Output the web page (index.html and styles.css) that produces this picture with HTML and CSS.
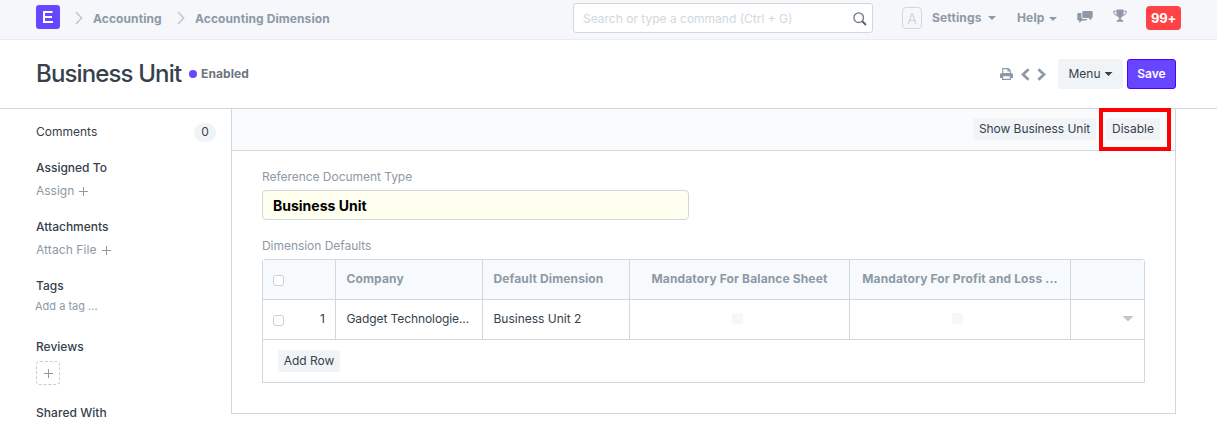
FILE: index.html
```html
<!DOCTYPE html>
<html lang="en">
<head>
<meta charset="utf-8">
<title>Business Unit</title>
<link rel="stylesheet" href="styles.css">
</head>
<body>
<header class="navbar">
  <nav class="crumbs">
    <svg class="logo" viewBox="0 0 24 24" width="24" height="24"><rect width="24" height="24" rx="3" fill="#6846ff"/><path d="M7 7H16.500M7 12H16M7 17H17M8 6V18" fill="none" stroke="#fff" stroke-width="2"/></svg>
    <svg class="chev" viewBox="0 0 8 14" width="8" height="14"><path d="M1 1l5.600 6L1 13"/></svg>
    <a class="crumb c1">Accounting</a>
    <svg class="chev" viewBox="0 0 8 14" width="8" height="14"><path d="M1 1l5.600 6L1 13"/></svg>
    <a class="crumb c2">Accounting Dimension</a>
  </nav>
  <div class="search">
    <span class="placeholder">Search or type a command (Ctrl + G)</span>
    <svg viewBox="0 0 14 14" width="14" height="14"><circle cx="5.700" cy="5.700" r="4.800" fill="none" stroke="#6c7680" stroke-width="1.300"/><path d="M9.200 9.200l3.800 3.800" stroke="#5a6672" stroke-width="2"/></svg>
  </div>
  <div class="nav-right">
    <span class="avatar">A</span>
    <span class="nav-link settings">Settings</span><i class="caret"></i>
    <span class="nav-link help">Help</span><i class="caret"></i>
    <svg class="chat" viewBox="0 0 16 14" width="16" height="14"><path fill="#8d99a6" d="M6.200 1h8.600q.9 0 .9.900v5.200q0 .9-.9.900h-.5v2.600L11.500 8H6.200q-.9 0-.9-.9V1.900q0-.9.900-.9z"/><path fill="#8d99a6" d="M1.200 3H4.400v4.300Q4.400 9 6.100 9H10v.6q0 .8-.8.800H5.200L2.200 13v-2.600h-1q-.9 0-.9-.9V3.900q0-.9.900-.9z"/></svg>
    <svg class="trophy" viewBox="0 0 14 14" width="14" height="14"><path fill="#8d99a6" d="M3.500.5h7v4.700q0 2.300-2.600 3.700v1.600q2.500.2 2.500 1.900v.3H3.600v-.3q0-1.700 2.500-1.900V8.900Q3.500 7.500 3.500 5.200z"/><path d="M3.500 2.200H.7v1q.3 2.800 3.900 3.300M10.500 2.200h2.800v1q-.3 2.800-3.900 3.300" fill="none" stroke="#8d99a6"/></svg>
    <span class="count">99+</span>
  </div>
</header>

<section class="page-head">
  <h1>Business Unit</h1>
  <i class="dot"></i><span class="status">Enabled</span>
  <div class="actions">
    <svg class="print" viewBox="0 0 13 12" width="13" height="12"><path d="M2.700 5.500V.6h5.600l2 2v2.900M8 .8v2.200h2.200" fill="none" stroke="#8d99a6" stroke-width="1.100"/><path fill="#8d99a6" fill-rule="evenodd" d="M1.500 5h10Q13 5 13 6.500V10h-2v2H2v-2H0V6.500Q0 5 1.500 5zM3.200 8.200v2.600h6.600V8.200z"/></svg>
    <svg class="prev" viewBox="0 0 9 13" width="9" height="13"><path d="M7.600 1.200L2 6.500l5.600 5.300"/></svg>
    <svg class="next" viewBox="0 0 9 13" width="9" height="13"><path d="M1.400 1.200L7 6.500l-5.600 5.300"/></svg>
    <button class="btn menu"><span>Menu</span><i class="caret"></i></button>
    <button class="btn save">Save</button>
  </div>
</section>

<main class="layout">
  <aside class="sidebar">
    <div class="comments"><span>Comments</span><span class="badge">0</span></div>
    <h2 class="s-assigned">Assigned To</h2>
    <a class="add"><span>Assign</span><i class="plus"></i></a>
    <h2 class="s-attach">Attachments</h2>
    <a class="add"><span class="t-file">Attach File</span><i class="plus"></i></a>
    <h2 class="s-tags">Tags</h2>
    <a class="tag">Add a tag ...</a>
    <h2 class="s-reviews">Reviews</h2>
    <span class="review"><i class="plus"></i></span>
    <h2 class="s-shared">Shared With</h2>
  </aside>
  <div class="panel">
    <div class="toolbar">
      <button class="btn-xs show">Show Business Unit</button>
      <div class="highlighted"><button class="btn-xs disable">Disable</button></div>
    </div>
    <div class="form">
      <label class="l1">Reference Document Type</label>
      <div class="input"><span>Business Unit</span></div>
      <label class="l2">Dimension Defaults</label>
      <div class="grid">
        <div class="row head">
          <div class="cell idx"><i class="check"></i></div>
          <div class="cell">Company</div>
          <div class="cell">Default Dimension</div>
          <div class="cell mid">Mandatory For Balance Sheet</div>
          <div class="cell mid">Mandatory For Profit and Loss ...</div>
          <div class="cell"></div>
        </div>
        <div class="row body">
          <div class="cell idx"><i class="check"></i><span>1</span></div>
          <div class="cell company">Gadget Technologie...</div>
          <div class="cell">Business Unit 2</div>
          <div class="cell mid"><i class="off"></i></div>
          <div class="cell mid"><i class="off"></i></div>
          <div class="cell end"><i class="open"></i></div>
        </div>
        <div class="foot"><button class="btn-xs addrow">Add Row</button></div>
      </div>
    </div>
  </div>
</main>
</body>
</html>
```
FILE: styles.css
```css
* { box-sizing: border-box; }
body { margin: 0; height: 423px; overflow: hidden; background: #fff; color: #36414c; font: 12px/18px Inter, "Liberation Sans", sans-serif; white-space: nowrap; }
svg, i { display: block; flex: none; }
h1, h2 { margin: 0; }
button { font: inherit; color: inherit; border: 0; margin: 0; }

.navbar { height: 40px; background: #f5f7fa; border-bottom: 1px solid #e9edf1; display: flex; align-items: flex-start; padding-left: 36px; }
.crumbs { display: flex; width: 537px; }
.logo { margin-top: 5px; }
.chev { margin: 11px 0 0 15px; fill: none; stroke: #c0cad3; stroke-width: 1.7; }
.crumb { margin: 10px 0 0 10px; font-weight: 700; color: #8d99a6; letter-spacing: 0.09px; }
.c1 { width: 69px; }
.search { width: 300px; height: 30px; margin-top: 3px; border: 1px solid #d1d8dd; border-radius: 3px; background: #fff; display: flex; align-items: center; justify-content: space-between; padding: 1px 5px 0 9px; color: #d1d8dd; }
.nav-right { display: flex; margin-left: 29px; }
.avatar { width: 20px; height: 22px; margin-top: 7px; border: 1px solid #d1d8dd; border-radius: 4px; color: #d1d8dd; text-align: center; line-height: 21px; font-size: 14px; }
.nav-link { margin-top: 9px; font-weight: 700; color: #8d99a6; letter-spacing: 0.15px; }
.settings { margin-left: 10px; width: 51px; }
.help { margin-left: 21px; width: 28px; }
.caret { width: 8px; height: 4px; background: currentColor; clip-path: polygon(0 0, 100% 0, 50% 100%); }
.nav-right .caret { margin: 16px 0 0 5px; color: #8d99a6; }
.nav-right .help + .caret { margin: 17px 0 0 4px; }
.chat { margin: 10px 0 0 20px; }
.trophy { margin: 9px 0 0 20px; }
.count { margin: 6px 0 0 19px; width: 35px; height: 24px; border-radius: 4px; background: #ff4246; color: #fff; font-weight: 700; line-height: 24px; text-align: center; font-size: 13px; letter-spacing: -0.3px; }

.page-head { height: 69px; border-bottom: 1px solid #d1d8dd; padding: 0 41px 0 36px; display: flex; align-items: center; }
h1 { font-size: 24px; font-weight: 500; line-height: 34px; width: 146px; letter-spacing: -0.86px; }
.dot { width: 8px; height: 8px; border-radius: 50%; background: #6846ff; margin-left: 7px; }
.status { margin-left: 4px; font-weight: 700; color: #6c7680; letter-spacing: 0.1px; }
.actions { margin-left: auto; display: flex; align-items: center; }
.prev, .next { fill: none; stroke: #8d99a6; stroke-width: 2.7; }
.prev { margin-left: 8px; }
.next { margin-left: 7px; }
.btn { height: 30px; border-radius: 3px; padding: 0; }
.menu { width: 65px; margin-left: 12px; background: #f0f4f7; display: flex; align-items: center; justify-content: center; gap: 4px; }
.save { width: 49px; margin-left: 4px; background: #6846ff; border: 1px solid #4e00ff; color: #fff; font-weight: 600; }

.layout { display: flex; padding-left: 36px; height: 314px; }
.sidebar { width: 195px; }
.comments { margin-top: 14px; height: 19px; display: flex; justify-content: space-between; padding-right: 15px; }
.badge { width: 22px; height: 19px; border-radius: 10px; background: #f0f4f7; text-align: center; line-height: 18px; }
h2 { font-size: 12px; line-height: 18px; font-weight: 500; color: #36414c; }
.s-assigned { margin-top: 17px; }
.add { display: flex; align-items: center; gap: 5px; height: 18px; margin-top: 5px; color: #8d99a6; }
.t-file { letter-spacing: 0.08px; }
.plus { width: 9px; height: 9px; background: linear-gradient(#8d99a6, #8d99a6) 50% 50% / 9px 1px no-repeat, linear-gradient(#8d99a6, #8d99a6) 50% 50% / 1px 9px no-repeat; }
.s-attach, .s-tags { margin-top: 18px; }
.tag { display: block; font-size: 11px; line-height: 16px; margin: 3px 0 0 -1px; color: #8d99a6; }
.s-reviews { margin-top: 24px; }
.review { width: 24px; height: 24px; margin-top: 5px; border: 1px dashed #c5ced6; border-radius: 4px; display: flex; align-items: center; justify-content: center; }
.s-shared { margin-top: 19px; letter-spacing: 0.05px; }

.panel { width: 945px; height: 305px; border: 1px solid #d1d8dd; border-top: 0; }
.toolbar { height: 42px; background: #fafbfc; border-bottom: 1px solid #d1d8dd; display: flex; justify-content: flex-end; align-items: flex-start; padding-right: 4px; }
.btn-xs { height: 22px; background: #f0f4f7; border-radius: 3px; padding: 0; text-align: center; line-height: 22px; }
.show { width: 123px; margin: 9px 3px 0 0; letter-spacing: -0.05px; }
.highlighted { width: 72px; height: 43px; margin-top: -1px; border: 4px solid #f00; padding: 6px 0 0 3px; }
.disable { width: 54px; display: block; }
.form { padding: 17px 30px 0; }
label { display: block; color: #8d99a6; line-height: 18px; letter-spacing: -0.04px; }
.input { width: 427px; height: 30px; margin-top: 4px; border: 1px solid #d1d8dd; border-radius: 4px; background: #fffff0; color: #000; font-size: 14px; font-weight: 700; line-height: 29px; padding-left: 10px; }
.l2 { margin-top: 17px; }
.grid { width: 883px; margin-top: 4px; border: 1px solid #d1d8dd; border-radius: 3px 3px 0 0; height: 124px; }
.row { display: grid; grid-template-columns: 73px 147px 147px 220px 221px 73px; height: 40px; border-bottom: 1px solid #d1d8dd; }
.head { background: #f7fafc; color: #8d99a6; font-weight: 700; letter-spacing: 0.13px; }
.cell { border-right: 1px solid #d1d8dd; padding: 0 0 1px 10.5px; display: flex; align-items: center; min-width: 0; }
.body .cell { padding-bottom: 2px; }
.company { letter-spacing: -0.09px; }
.cell:last-child { border-right: 0; }
.cell.idx { padding-left: 10px; padding-right: 10px; justify-content: space-between; }
.cell.mid { padding-left: 0; justify-content: center; }
.check { width: 11px; height: 11px; border: 1px solid #c9d1d8; border-radius: 3px; margin-top: 3px; background: #fff; }
.body .check { margin-top: 4px; }
.off { width: 11px; height: 11px; border-radius: 2px; background: #f5f7fa; margin-right: 5px; }
.end { justify-content: flex-end; padding-right: 10px; }
.open { width: 12px; height: 6px; background: #c6c6c6; clip-path: polygon(0 0, 100% 0, 50% 100%); }
.foot { padding: 10px 15px; }
.addrow { width: 62px; display: block; }
```
